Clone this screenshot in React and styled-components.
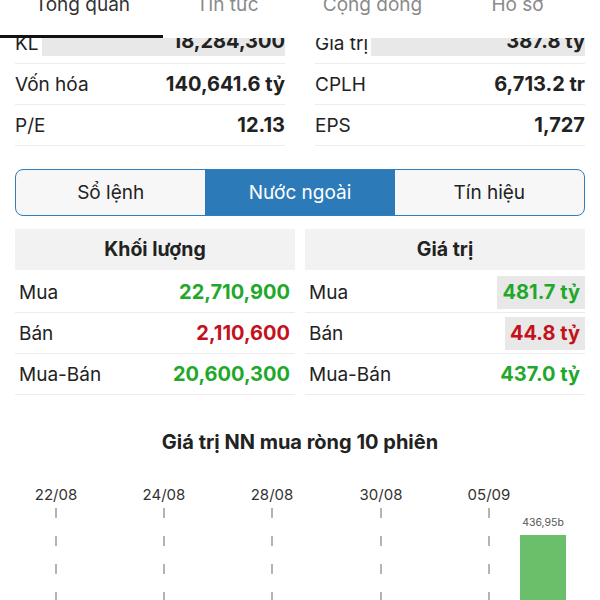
import React from "react";
import styled, { createGlobalStyle } from "styled-components";

const GlobalStyle = createGlobalStyle`
  body {
    margin: 0;
    background: #fff;
    font-family: Inter, "Noto Sans", "Liberation Sans", sans-serif;
    color: #222;
  }
`;

const Page = styled.div`
  width: 600px;
  height: 600px;
  overflow: hidden;
`;

const TabBar = styled.div`
  position: relative;
  z-index: 2;
  height: 38px;
  background: #fff;
  display: grid;
  grid-template-columns: repeat(4, 1fr);
  padding: 0 10px;
  overflow: hidden;
`;

const Tab = styled.div`
  text-align: center;
  font-size: 19px;
  line-height: 24px;
  margin-top: -7px;
  color: ${(p) => (p.$active ? "#333" : "#8a8a8a")};
`;

const Indicator = styled.div`
  position: absolute;
  left: 0;
  bottom: 0;
  width: 163px;
  height: 3px;
  background: #111;
`;

const Stats = styled.div`
  display: grid;
  grid-template-columns: 1fr 1fr;
  column-gap: 30px;
  padding: 0 15px;
  margin-top: -15px;
`;

const StatRow = styled.div`
  display: flex;
  align-items: center;
  justify-content: space-between;
  height: 41px;
  box-sizing: border-box;
  border-bottom: 1px solid #ececec;
  font-size: 19px;
`;

const StatValue = styled.span`
  font-weight: 700;
  font-size: 20px;
  text-align: right;
  ${(p) =>
    p.$flash &&
    `
    flex: 1;
    align-self: flex-end;
    margin: 0 0 7px 3px;
    height: 30px;
    line-height: 30px;
    background: #e8e8e8;
  `}
`;

const Segmented = styled.div`
  margin: 23px 15px 0;
  height: 47px;
  box-sizing: border-box;
  border: 1.5px solid #2f7dbb;
  border-radius: 8px;
  overflow: hidden;
  background: #f7f7f7;
  display: grid;
  grid-template-columns: repeat(3, 1fr);
`;

const Segment = styled.div`
  display: flex;
  align-items: center;
  justify-content: center;
  font-size: 19px;
  color: ${(p) => (p.$active ? "#fff" : "#222")};
  background: ${(p) => (p.$active ? "#2c7bb8" : "transparent")};
`;

const Tables = styled.div`
  display: grid;
  grid-template-columns: 1fr 1fr;
  column-gap: 10px;
  padding: 0 15px;
  margin-top: 13px;
`;

const TableHead = styled.div`
  height: 41px;
  line-height: 41px;
  background: #f2f2f2;
  text-align: center;
  font-size: 19.5px;
  font-weight: 700;
  margin-bottom: 2px;
`;

const TableRow = styled.div`
  display: flex;
  align-items: center;
  justify-content: space-between;
  height: 41px;
  box-sizing: border-box;
  border-bottom: 1px solid #ececec;
  padding-left: 4px;
  font-size: 19px;
`;

const colors = { up: "#1fa82a", down: "#c4121c" };

const TableValue = styled.span`
  height: 33px;
  line-height: 33px;
  padding: 0 5px;
  font-size: 20px;
  font-weight: 700;
  color: ${(p) => colors[p.$tone]};
  background: ${(p) => (p.$flash ? "#e8e8e8" : "transparent")};
`;

const ChartTitle = styled.div`
  margin-top: 35px;
  text-align: center;
  font-size: 20px;
  line-height: 24px;
  font-weight: 700;
`;

const ChartSvg = styled.svg`
  display: block;
`;

const stats = [
  [
    { label: "KL", value: "18,284,300", flash: true },
    { label: "Vốn hóa", value: "140,641.6 tỷ" },
    { label: "P/E", value: "12.13" },
  ],
  [
    { label: "Giá trị", value: "387.8 tỷ", flash: true },
    { label: "CPLH", value: "6,713.2 tr" },
    { label: "EPS", value: "1,727" },
  ],
];

const tables = [
  {
    title: "Khối lượng",
    rows: [
      { label: "Mua", value: "22,710,900", tone: "up" },
      { label: "Bán", value: "2,110,600", tone: "down" },
      { label: "Mua-Bán", value: "20,600,300", tone: "up" },
    ],
  },
  {
    title: "Giá trị",
    rows: [
      { label: "Mua", value: "481.7 tỷ", tone: "up", flash: true },
      { label: "Bán", value: "44.8 tỷ", tone: "down", flash: true },
      { label: "Mua-Bán", value: "437.0 tỷ", tone: "up" },
    ],
  },
];

const dates = [
  { x: 56, label: "22/08" },
  { x: 164, label: "24/08" },
  { x: 272, label: "28/08" },
  { x: 381, label: "30/08" },
  { x: 489, label: "05/09" },
];

function Chart() {
  return (
    <ChartSvg width="600" height="146" viewBox="0 0 600 146">
      {dates.map((d) => (
        <g key={d.label}>
          <text
            x={d.x}
            y="46"
            textAnchor="middle"
            fontSize="15"
            fill="#333"
            fontFamily="Inter, sans-serif"
          >
            {d.label}
          </text>
          <line
            x1={d.x}
            x2={d.x}
            y1="54"
            y2="146"
            stroke="#9a9a9a"
            strokeWidth="1.5"
            strokeDasharray="10 18"
          />
        </g>
      ))}
      <text
        x="543"
        y="72"
        textAnchor="middle"
        fontSize="10.5"
        fill="#555"
        fontFamily="Inter, sans-serif"
      >
        436,95b
      </text>
      <rect x="520" y="81" width="46" height="70" fill="#6bbf6b" />
    </ChartSvg>
  );
}

export default function App() {
  return (
    <Page>
      <GlobalStyle />
      <TabBar>
        <Tab $active>Tổng quan</Tab>
        <Tab>Tin tức</Tab>
        <Tab>Cộng đồng</Tab>
        <Tab>Hồ sơ</Tab>
        <Indicator />
      </TabBar>

      <Stats>
        {stats.map((col, i) => (
          <div key={i}>
            {col.map((s) => (
              <StatRow key={s.label}>
                <span>{s.label}</span>
                <StatValue $flash={s.flash}>{s.value}</StatValue>
              </StatRow>
            ))}
          </div>
        ))}
      </Stats>

      <Segmented>
        <Segment>Sổ lệnh</Segment>
        <Segment $active>Nước ngoài</Segment>
        <Segment>Tín hiệu</Segment>
      </Segmented>

      <Tables>
        {tables.map((t) => (
          <div key={t.title}>
            <TableHead>{t.title}</TableHead>
            {t.rows.map((r) => (
              <TableRow key={r.label}>
                <span>{r.label}</span>
                <TableValue $tone={r.tone} $flash={r.flash}>
                  {r.value}
                </TableValue>
              </TableRow>
            ))}
          </div>
        ))}
      </Tables>

      <ChartTitle>Giá trị NN mua ròng 10 phiên</ChartTitle>
      <Chart />
    </Page>
  );
}
